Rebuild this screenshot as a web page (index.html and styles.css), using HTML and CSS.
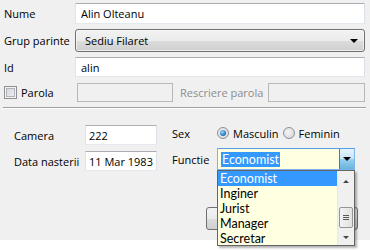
FILE: index.html
```html
<!DOCTYPE html>
<html>
<head>
<meta charset="utf-8">
<link rel="stylesheet" href="styles.css">
</head>
<body>
<div class="dialog">
  <div class="top">
    <div class="row r1"><span class="lbl">Nume</span><div class="field grow">Alin Olteanu</div></div>
    <div class="row r2"><span class="lbl">Grup parinte</span><div class="combo grow"><span>Sediu Filaret</span><span class="tri"></span></div></div>
    <div class="row r3"><span class="lbl">Id</span><div class="field grow">alin</div></div>
    <div class="row r4">
      <span class="check"></span><span class="lbl-parola">Parola</span>
      <div class="field disabled pass1"></div>
      <span class="dis-lbl">Rescriere parola</span>
      <div class="field disabled grow"></div>
    </div>
  </div>
  <div class="sep"></div>
  <div class="bottom">
    <div class="col-left">
      <div class="brow"><span class="blbl">Camera</span><div class="field small">222</div></div>
      <div class="brow"><span class="blbl">Data nasterii</span><div class="field small">11 Mar 1983</div></div>
    </div>
    <div class="col-right">
      <div class="srow">
        <span class="slbl">Sex</span>
        <span class="radio on"></span><span class="rtxt">Masculin</span>
        <span class="radio"></span><span class="rtxt">Feminin</span>
      </div>
      <div class="frow">
        <span class="slbl">Functie</span>
        <div class="ecombo">
          <span class="sel">Economist</span>
          <span class="ebtn"><span class="tri"></span></span>
          <div class="list">
            <div class="items">
              <div class="item hi">Economist</div>
              <div class="item">Inginer</div>
              <div class="item">Jurist</div>
              <div class="item">Manager</div>
              <div class="item">Secretar</div>
            </div>
            <div class="sbar">
              <span class="sup"></span>
              <span class="thumb"><i></i><i></i><i></i></span>
              <span class="sdown"></span>
            </div>
          </div>
        </div>
      </div>
      <div class="brow-btn"><div class="btn"></div></div>
    </div>
  </div>
</div>
</body>
</html>
```
FILE: styles.css
```css
html, body { margin: 0; padding: 0; background: #ffffff; }
body { font-family: "Open Sans", "Noto Sans", sans-serif; font-size: 11px; color: #000; min-height: 250px; }
.dialog { background: #f0f0f0; height: 240px; box-sizing: border-box; width: 370px; overflow: visible; position: relative; }
.top { padding: 3px 5px 0 4px; display: flex; flex-direction: column; }
.row { display: flex; align-items: center; }
.r1 { height: 21px; }
.r2 { height: 23px; margin-top: 5px; }
.r3 { height: 20px; margin-top: 5px; }
.r4 { height: 19px; margin-top: 6px; }
.lbl { width: 71px; flex: none; }
.grow { flex: 1; }
.field { box-sizing: border-box; height: 100%; background: #fff; border: 1px solid #c9ccd2; border-top-color: #abadb3; border-left-color: #e2e3ea; border-right-color: #dbdfe6; border-bottom-color: #e3e9ef; padding-left: 5px; display: flex; align-items: center; white-space: nowrap; }
.field.disabled { background: #f0f0f0; border-color: #b8b8b8; }
.combo { box-sizing: border-box; height: 100%; border: 1px solid #707070; border-radius: 3px; background: linear-gradient(#f2f2f2 0%, #ebebeb 50%, #dddddd 51%, #cfcfcf 100%); display: flex; align-items: center; justify-content: space-between; padding: 0 6px 0 9px; box-shadow: inset 0 0 0 1px rgba(255,255,255,0.6); }
.tri { width: 0; height: 0; border-left: 4px solid transparent; border-right: 4px solid transparent; border-top: 4px solid #000; }
.check { width: 13px; height: 13px; box-sizing: border-box; border: 1px solid #8e8f8f; background: linear-gradient(135deg, #cbcfd5, #f6f6f6); box-shadow: inset 0 0 0 1px #f4f4f4, inset 0 0 0 2px #b0b4ba; flex: none; }
.lbl-parola { margin-left: 4px; width: 56px; }
.pass1 { width: 96px; flex: none; }
.dis-lbl { color: #8d8d8d; margin: 0 5px 0 7px; white-space: nowrap; }
.sep { margin: 5px 4px 0 3px; height: 1px; background: #a0a0a0; border-bottom: 1px solid #ffffff; }
.bottom { display: flex; padding: 16px 0 0 14px; }
.col-left { width: 143px; flex: none; display: flex; flex-direction: column; gap: 6px; }
.brow { display: flex; align-items: center; height: 20px; }
.blbl { width: 71px; flex: none; white-space: nowrap; }
.field.small { width: 72px; flex: none; padding-left: 3px; }
.col-right { margin-left: 15px; display: flex; flex-direction: column; }
.srow { display: flex; align-items: center; height: 20px; margin-top: -2px; }
.slbl { width: 45px; flex: none; }
.radio { width: 12px; height: 12px; box-sizing: border-box; border-radius: 50%; border: 1px solid #8e8f8f; background: radial-gradient(circle at 40% 40%, #f4f4f4, #d2d4d8); flex: none; position: relative; }
.radio.on::after { content: ""; position: absolute; left: 2px; top: 2px; width: 6px; height: 6px; border-radius: 50%; background: radial-gradient(circle at 40% 35%, #9ad8ff, #1a6bb5 70%, #0d3f7a); }
.rtxt { margin-left: 4px; margin-right: 4px; }
.frow { display: flex; align-items: center; height: 22px; margin-top: 5px; }
.ecombo { position: relative; box-sizing: border-box; width: 138px; height: 22px; border: 1px solid #7eb4ea; border-top-color: #569de5; background: #ffffe1; display: flex; align-items: center; padding-left: 3px; }
.sel { background: #3399ff; color: #fff; padding: 0 1px; line-height: 15px; height: 15px; font-family: Lato, "Open Sans", sans-serif; font-size: 12.5px; }
.ebtn { position: absolute; right: 0; top: 0; bottom: 0; width: 15px; box-sizing: border-box; border-left: 1px solid #3c7fb1; background: linear-gradient(#e5f4fc 0%, #c4e5f6 50%, #98d1ef 51%, #68b3db 100%); display: flex; align-items: center; justify-content: center; }
.list { position: absolute; left: -1px; top: 21px; width: 138px; height: 76px; box-sizing: border-box; border: 1px solid #646464; background: #ffffe1; display: flex; box-shadow: 2px 2px 2px rgba(0,0,0,0.3); z-index: 5; }
.items { flex: 1; padding-top: 0; }
.item { height: 15px; line-height: 15px; padding-left: 2px; font-family: Lato, "Open Sans", sans-serif; font-size: 12.5px; }
.item.hi { background: #3399ff; color: #fff; }
.sbar { width: 16px; flex: none; background: #f0f0f0; border-left: 1px solid #e8e8e8; position: relative; }
.sup, .sdown { position: absolute; left: 5px; width: 0; height: 0; border-left: 3px solid transparent; border-right: 3px solid transparent; }
.sup { top: 9px; border-bottom: 3px solid #444; }
.sdown { bottom: 6px; border-top: 3px solid #444; }
.thumb { position: absolute; left: 1px; right: 1px; top: 36px; height: 21px; box-sizing: border-box; border: 1px solid #959595; border-radius: 2px; background: linear-gradient(90deg, #f3f3f3, #e2e2e2); display: flex; flex-direction: column; align-items: center; justify-content: center; gap: 1px; }
.thumb i { display: block; width: 6px; height: 1px; background: #5a5a5a; }
.brow-btn { margin-top: 37px; margin-left: 34px; }
.btn { width: 152px; height: 23px; box-sizing: border-box; border: 1px solid #707070; border-radius: 3px; background: linear-gradient(#f2f2f2 0%, #ebebeb 50%, #dddddd 51%, #cfcfcf 100%); }
```
